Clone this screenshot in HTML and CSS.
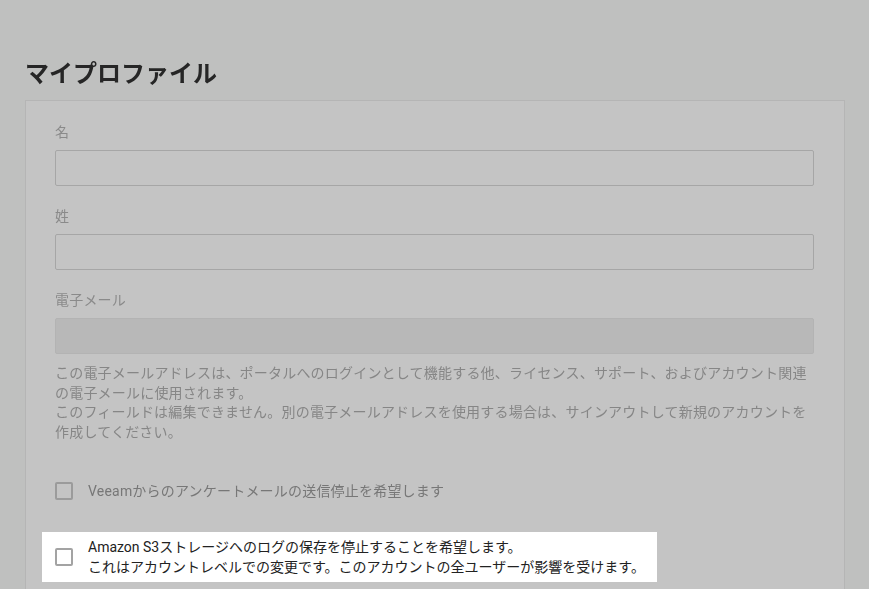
FILE: index.html
```html
<!DOCTYPE html>
<html lang="ja">
<head>
    <meta charset="UTF-8">
    <title>マイプロファイル</title>
    <link rel="stylesheet" href="styles.css">
</head>
<body>
    <div class="page">
        <h1 class="title">マイプロファイル</h1>
        <div class="card">
            <div class="field">
                <label class="field-label">名</label>
                <div class="input"></div>
            </div>
            <div class="field">
                <label class="field-label">姓</label>
                <div class="input"></div>
            </div>
            <div class="field">
                <label class="field-label">電子メール</label>
                <div class="input disabled"></div>
            </div>
            <p class="help">
                この電子メールアドレスは、ポータルへのログインとして機能する他、ライセンス、サポート、およびアカウント関連の電子メールに使用されます。<br>
                このフィールドは編集できません。別の電子メールアドレスを使用する場合は、サインアウトして新規のアカウントを作成してください。
            </p>
            <div class="option">
                <span class="checkbox"></span>
                <span class="option-text">Veeamからのアンケートメールの送信停止を希望します</span>
            </div>
            <div class="option spotlight">
                <span class="checkbox"></span>
                <span class="option-text">Amazon S3ストレージへのログの保存を停止することを希望します。<br>これはアカウントレベルでの変更です。このアカウントの全ユーザーが影響を受けます。</span>
            </div>
        </div>
    </div>
</body>
</html>
```

FILE: styles.css
```css
body {
    margin: 0;
    background-color: #bfc0bf;
    font-family: Roboto, "Noto Sans CJK JP", sans-serif;
    overflow: hidden;
}

.page {
    padding: 58px 24px 0 25px;
}

.title {
    margin: 0 0 10px;
    font-size: 24px;
    line-height: 32px;
    font-weight: 700;
    color: #262626;
    filter: blur(0.4px);
}

.card {
    background-color: #c4c4c4;
    border: 1px solid #b5b5b5;
    border-bottom: none;
    padding: 21px 30px 40px 29px;
    height: 600px;
    letter-spacing: 0.2px;
}

/* everything behind the tour mask is slightly blurred */
.card > :not(.spotlight) {
    filter: blur(0.4px);
}

.field {
    margin-bottom: 20px;
}

.field:nth-child(3) {
    margin-bottom: 0;
}

.field-label {
    display: block;
    font-size: 14px;
    line-height: 20px;
    color: #8a8a8a;
    margin-bottom: 8px;
}

.input {
    height: 34px;
    border: 1px solid #a6a6a6;
    border-radius: 2px;
}

.input.disabled {
    background-color: #b8b8b8;
    border-color: #b3b3b3;
}

.help {
    margin: 10px 0 0;
    font-size: 14px;
    line-height: 19.6px;
    color: #868686;
}

.option {
    display: flex;
    align-items: center;
    gap: 15px;
    margin-top: 39px;
    font-size: 14px;
    line-height: 20px;
    color: #777;
}

.checkbox {
    flex: none;
    width: 14px;
    height: 14px;
    border: 2px solid #9b9b9b;
    border-radius: 2px;
}

.option.spotlight {
    width: fit-content;
    margin: 31px 0 0 -13px;
    padding: 5px 12px 5px 13px;
    background-color: #fff;
    color: #222;
    letter-spacing: 0;
}

.spotlight .checkbox {
    border-color: #a3a3a3;
}
```
